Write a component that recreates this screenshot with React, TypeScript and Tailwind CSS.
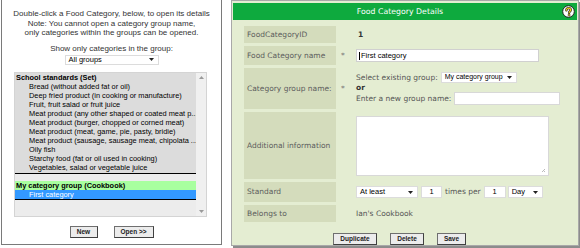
import clsx from 'clsx';

const Caret = () => (
  <svg width="5" height="3" viewBox="0 0 5 3" className="shrink-0">
    <path d="M0 0h5L2.5 3z" fill="#222" />
  </svg>
);

function FakeSelect({ value, className, small }: { value: string; className?: string; small?: boolean }) {
  return (
    <div
      className={clsx(
        "flex items-center justify-between bg-white border border-[#dcdcdc] pl-[3px] pr-[4px] font-['Liberation_Sans',sans-serif] text-black whitespace-nowrap",
        small ? 'text-[7px]' : 'text-[7.5px]',
        className,
      )}
    >
      <span>{value}</span>
      <Caret />
    </div>
  );
}

function HelpIcon() {
  return (
    <svg width="13" height="13" viewBox="0 0 13 13">
      <circle cx="6.5" cy="6.5" r="5.8" fill="#fff" stroke="#222" strokeWidth="1" />
      <path
        d="M4.4 5.2c0-1.3 1-2.1 2.2-2.1s2.1.8 2.1 1.9c0 1.3-1.6 1.5-1.6 2.8"
        fill="none"
        stroke="#222"
        strokeWidth="2.4"
        strokeLinecap="round"
      />
      <path
        d="M4.4 5.2c0-1.3 1-2.1 2.2-2.1s2.1.8 2.1 1.9c0 1.3-1.6 1.5-1.6 2.8"
        fill="none"
        stroke="#f3d21a"
        strokeWidth="1.2"
        strokeLinecap="round"
      />
      <circle cx="7.1" cy="10" r="1.1" fill="#f3d21a" stroke="#222" strokeWidth="0.6" />
    </svg>
  );
}

const schoolItems = [
  'Bread (without added fat or oil)',
  'Deep fried product (in cooking or manufacture)',
  'Fruit, fruit salad or fruit juice',
  'Meat product (any other shaped or coated meat p...',
  'Meat product (burger, chopped or corned meat)',
  'Meat product (meat, game, pie, pasty, bridie)',
  'Meat product (sausage, sausage meat, chipolata ...',
  'Oily fish',
  'Starchy food (fat or oil used in cooking)',
  'Vegetables, salad or vegetable juice',
];

function SmallButton({ children, className }: { children: React.ReactNode; className?: string }) {
  return (
    <div
      className={clsx(
        "flex items-center justify-center h-[12px] bg-[#ececec] border border-[#6f6f6f] border-r-[#404040] border-b-[#404040] font-['Liberation_Sans',sans-serif] text-[6.5px] font-bold text-[#222] whitespace-nowrap",
        className,
      )}
    >
      {children}
    </div>
  );
}

function CategoryList() {
  return (
    <div className="w-full flex flex-col items-center font-['Liberation_Sans',sans-serif] text-black">
      <div className="pt-[9px] text-center text-[8px] leading-[9.5px] text-[#333] whitespace-nowrap">
        <div>Double-click a Food Category, below, to open its details</div>
        <div>Note: You cannot open a category group name,</div>
        <div>only categories within the groups can be opened.</div>
      </div>
      <div className="mt-[6px] text-[8px] leading-[10px] text-[#333]">Show only categories in the group:</div>
      <FakeSelect value="All groups" className="mt-px w-[94px] h-[10px]" />

      {/* listbox */}
      <div className="self-start ml-[12px] mt-[7px] w-[193px] h-[145px] flex border border-[#d4d4d4] bg-[#ececec]">
        <div className="flex-1 min-w-0 flex flex-col text-[7.4px] leading-[9px] overflow-hidden">
          <div className="bg-[#dcdcdc] border-b border-black pb-[1px]">
            <div className="pl-[1px] font-bold">School standards (Set)</div>
            {schoolItems.map((item) => (
              <div key={item} className="pl-[14px] whitespace-nowrap overflow-hidden">
                {item}
              </div>
            ))}
          </div>
          <div className="mt-[7px] border-b border-black">
            <div className="pl-[1px] font-bold bg-[#a8ff9f]">My category group (Cookbook)</div>
            <div className="pl-[14px] bg-[#3399ff] text-white">First category</div>
          </div>
        </div>
        <div className="w-[10px] shrink-0 bg-[#f0f0f0] flex flex-col items-center justify-between py-[3px]">
          <svg width="5" height="3" viewBox="0 0 5 3">
            <path d="M0 3h5L2.5 0z" fill="#9a9a9a" />
          </svg>
          <svg width="5" height="3" viewBox="0 0 5 3">
            <path d="M0 0h5L2.5 3z" fill="#9a9a9a" />
          </svg>
        </div>
      </div>

      <div className="mt-[9px] flex gap-[16px]">
        <SmallButton className="w-[28px]">New</SmallButton>
        <SmallButton className="w-[40px]">Open &gt;&gt;</SmallButton>
      </div>
    </div>
  );
}

function Label({ children }: { children: React.ReactNode }) {
  return (
    <div className="w-[92px] shrink-0 bg-[#d4dcbc] flex items-center pl-[3px] text-[#5c5c5c] whitespace-nowrap">
      {children}
    </div>
  );
}

function Star({ show = true }: { show?: boolean }) {
  return (
    <div className="w-[20px] shrink-0 flex items-center pl-[5px] text-[#777]">{show ? '*' : ''}</div>
  );
}

function FoodCategoryDetails() {
  return (
    <div className="ml-[9px] w-[348px] h-[246px] shrink-0 bg-[#e4edd2] border border-[#a8a8a8] shadow-[2px_2px_0_#8c8c8c] font-['DejaVu_Sans',sans-serif] text-[7.5px]">
      <div className="mx-px mt-[2px] h-[17px] bg-[#0eaa3e] flex items-center relative">
        <div className="flex-1 text-center text-white text-[7.8px] pr-[10px]">Food Category Details</div>
        <div className="absolute right-[2px] top-[2px]">
          <HelpIcon />
        </div>
      </div>

      <div className="pl-[12px] mt-[6px] flex flex-col gap-[3px]">
        <div className="flex h-[17px]">
          <Label>FoodCategoryID</Label>
          <Star show={false} />
          <div className="flex items-center pl-[2px] font-bold text-[#333]">1</div>
        </div>

        <div className="flex h-[19px]">
          <Label>Food Category name</Label>
          <Star />
          <div className="flex items-center">
            <div className="w-[183px] h-[13px] bg-white border border-[#d0d0d0] flex items-center pl-[2px] font-['Liberation_Sans',sans-serif] text-[7.5px] text-black">
              <span className="border-l border-black pl-px leading-[8px]">First category</span>
            </div>
          </div>
        </div>

        <div className="flex h-[41px]">
          <Label>Category group name:</Label>
          <Star />
          <div className="flex flex-col justify-center text-[#555] whitespace-nowrap">
            <div className="flex items-center gap-[3px]">
              <span>Select existing group:</span>
              <FakeSelect value="My category group" small className="w-[76px] h-[11px]" />
            </div>
            <div className="font-bold text-[#333] leading-[9px]">or</div>
            <div className="flex items-center gap-[3px]">
              <span>Enter a new group name:</span>
              <div className="w-[106px] h-[13px] bg-white border border-[#d8d8d8]" />
            </div>
          </div>
        </div>

        <div className="flex h-[67px]">
          <Label>Additional information</Label>
          <Star show={false} />
          <div className="flex items-center">
            <div className="w-[193px] h-[60px] bg-white border border-[#d8d8d8] relative">
              <svg width="5" height="5" viewBox="0 0 5 5" className="absolute right-[2px] bottom-[2px]">
                <path d="M4 1L1 4M4 3L3 4" stroke="#aaa" strokeWidth="0.8" />
              </svg>
            </div>
          </div>
        </div>

        <div className="flex h-[20px]">
          <Label>Standard</Label>
          <Star show={false} />
          <div className="flex items-center text-[#555] whitespace-nowrap">
            <FakeSelect value="At least" className="w-[62px] h-[12px]" />
            <div className="ml-[3px] w-[21px] h-[12px] bg-white border border-[#dcdcdc] flex items-center justify-center font-['Liberation_Sans',sans-serif] text-[7.5px] text-black">
              1
            </div>
            <span className="ml-[3px]">times per</span>
            <div className="ml-[3px] w-[22px] h-[12px] bg-white border border-[#dcdcdc] flex items-center justify-center font-['Liberation_Sans',sans-serif] text-[7.5px] text-black">
              1
            </div>
            <FakeSelect value="Day" className="ml-[2px] w-[35px] h-[12px]" />
          </div>
        </div>

        <div className="flex h-[17px]">
          <Label>Belongs to</Label>
          <Star show={false} />
          <div className="flex items-center text-[#555]">Ian's Cookbook</div>
        </div>
      </div>

      <div className="mt-[11px] flex justify-center gap-[13px] pr-[11px]">
        <SmallButton className="w-[44px]">Duplicate</SmallButton>
        <SmallButton className="w-[34px]">Delete</SmallButton>
        <SmallButton className="w-[29px]">Save</SmallButton>
      </div>
    </div>
  );
}

export default function App() {
  return (
    <div className="w-[580px] h-[248px] bg-white flex overflow-hidden">
      <div className="ml-px w-[221px] h-[245px] border border-t-0 border-[#7a7a7a] shrink-0">
        <CategoryList />
      </div>
      <FoodCategoryDetails />
    </div>
  );
}
